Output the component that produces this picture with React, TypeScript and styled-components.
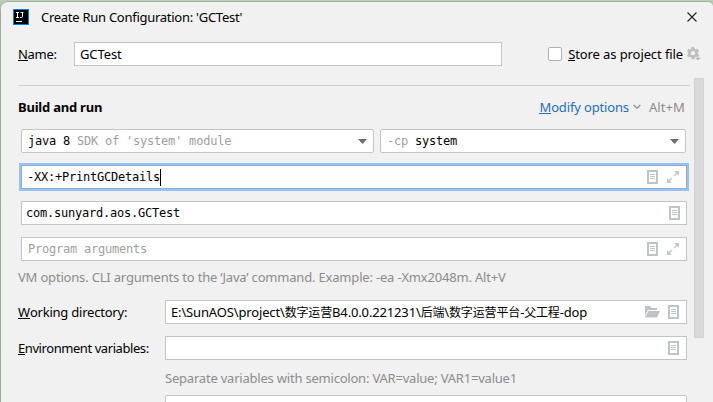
import React from "react";
import styled, { createGlobalStyle } from "styled-components";

const GlobalStyle = createGlobalStyle`
  *, *::before, *::after { box-sizing: border-box; }
  html, body { margin: 0; height: 100%; overflow: hidden; }
  body { background: linear-gradient(#b9d3b7, #a0aca0 12px, #9ba69c); }
`;

const ui = '"Noto Sans", "Noto Sans CJK SC", sans-serif';
const mono = '"DejaVu Sans Mono", monospace';

const Dialog = styled.main`
  height: 401px;
  margin: 1px 0 0 1px;
  border-top: 1px solid #a3b2a2;
  border-radius: 7px 5px 0 0;
  background: #f1f1f1;
  overflow: hidden;
  display: flex;
  flex-direction: column;
  font: 13px ${ui};
  color: #000;
`;

const Label = styled.span<{ $tone?: "hint" | "link" | "black"; $bold?: boolean; $track?: number }>`
  color: ${(p) => (p.$tone === "hint" ? "#8c8c8c" : p.$tone === "link" ? "#2470b3" : "#000")};
  font-weight: ${(p) => (p.$bold ? 700 : 400)};
  letter-spacing: ${(p) => p.$track ?? 0}px;
  line-height: 18px;
  white-space: nowrap;
`;

const Mnemonic = styled.span`
  box-shadow: inset 0 -1px 0 currentColor;
  display: inline-block;
  height: 16px;
  line-height: 18px;
  vertical-align: top;
`;

const TitleBar = styled.header`
  height: 30px;
  flex: none;
  display: flex;
  align-items: center;
  padding: 0 16px 0 12px;
  gap: 12px;

  & > svg:last-child { margin-left: auto; }
`;

const NameRow = styled.div`
  height: 24px;
  margin-top: 10px;
  flex: none;
  display: flex;
  align-items: center;
  padding: 0 12px 0 17px;
`;

const NameLabel = styled.div`
  width: 56px;
  display: flex;
`;

const Field = styled.div<{ $width?: number; $rounded?: boolean; $focused?: boolean; $pad?: number; $right?: number }>`
  width: ${(p) => (p.$width ? `${p.$width}px` : "auto")};
  height: 24px;
  flex: none;
  display: flex;
  align-items: center;
  padding: 0 ${(p) => p.$right ?? 7}px 0 ${(p) => p.$pad ?? 5}px;
  background: #fff;
  border: 1px solid ${(p) => (p.$focused ? "#87afda" : "#c4c4c4")};
  border-radius: ${(p) => (p.$rounded ? 2 : 0)}px;
  box-shadow: ${(p) => (p.$focused ? "0 0 0 2px #97c3f3" : "none")};
`;

const Actions = styled.div<{ $gap?: number }>`
  margin-left: auto;
  display: flex;
  align-items: center;
  gap: ${(p) => p.$gap ?? 9}px;
`;

const Store = styled.label`
  margin-left: auto;
  display: flex;
  align-items: center;
  gap: 6px;

  & > svg { margin-left: -2px; }
`;

const Checkbox = styled.span`
  width: 14px;
  height: 14px;
  background: #fff;
  border: 1px solid #b0b0b0;
  border-radius: 2px;
`;

const Body = styled.div`
  flex: 1;
  min-height: 0;
  margin-top: 12px;
  display: flex;
  justify-content: space-between;
`;

const Content = styled.div`
  width: 689px;
  padding: 7px 0 0 17px;
  display: flex;
  flex-direction: column;
`;

const Divider = styled.div`
  height: 1px;
  width: 672px;
  flex: none;
  background: #d0d0d0;
`;

const ScrollTrack = styled.div`
  width: 19px;
`;

const ScrollThumb = styled.div`
  width: 10px;
  height: 260px;
  background: #d9d9d9;
  border: 1px solid #d3d3d3;
`;

const SectionHead = styled.div`
  height: 43px;
  flex: none;
  display: flex;
  align-items: center;
  padding: 0 5px 2px 0;
`;

const Options = styled.div`
  margin-left: auto;
  display: flex;
  align-items: center;
`;

const Chevron = styled.svg`
  margin: 1px 8px 0 4px;
`;

const Stack = styled.div`
  flex: none;
  display: flex;
  flex-direction: column;
  gap: 12px;
  padding: 0 3px;
`;

const Combos = styled.div`
  display: flex;
  gap: 6px;
`;

const Code = styled.span<{ $muted?: boolean }>`
  font: 12px ${mono};
  letter-spacing: -0.22px;
  line-height: 18px;
  color: ${(p) => (p.$muted ? "#a0a0a0" : "#000")};
  white-space: pre;
`;

const Caret = styled.span`
  width: 1px;
  height: 17px;
  background: #000;
`;

const Hint = styled.div`
  height: 39px;
  flex: none;
  padding-bottom: 7px;
  display: flex;
  align-items: center;
`;

const Form = styled.div`
  flex: none;
  display: grid;
  grid-template-columns: 147px 522px;
  row-gap: 12px;
  align-items: center;
`;

const SubHint = styled.div`
  grid-column: 2;
  height: 11px;
  display: flex;
  align-items: center;
`;

const LastField = styled.div`
  grid-column: 2;
`;

const Han = styled.span`
  font-size: 12px;
`;

const Logo = () => (
  <svg width="16" height="16" viewBox="0 0 16 16">
    <rect width="16" height="16" fill="#087cfa" />
    <rect x="1" y="1" width="14" height="14" fill="#000" />
    <path d="M3 3.5h3M4.5 3.5v5M3 8.500h3M7.500 3.500h3M9.500 3.500v3.700q0 1.300-1.300 1.300H7" stroke="#fff" fill="none" />
    <path d="M3 12.500h6" stroke="#fff" />
  </svg>
);

const Close = () => (
  <svg width="10" height="10" viewBox="0 0 10 10">
    <path d="M.5.5l9 9M9.500.5l-9 9" stroke="#222" strokeWidth="1.100" fill="none" />
  </svg>
);

const Gear = () => (
  <svg width="14" height="14" viewBox="0 0 14 14">
    <path
      fill="#bfbfbf"
      fillRule="evenodd"
      d="M4.6 0h2.8l.4 1.8 1.2.6 1.8-.6 1.3 2.4-1.300 1.300v1.200l1.300 1.300-1.300 2.300-1.800-.5-1.200.7-.4 1.700H4.600l-.4-1.700-1.200-.7-1.800.5L0 8l1.200-1.300V5.500L0 4.200l1.200-2.400 1.800.6 1.200-.6zM6 3.900a2.200 2.200 0 1 0 0 4.400 2.200 2.200 0 0 0 0-4.400z"
    />
    <path d="M8 10.500h6l-3 3z" fill="#a9a9a9" stroke="#f1f1f1" strokeWidth=".5" />
  </svg>
);

const DownArrow = () => (
  <svg width="9" height="5" viewBox="0 0 9 5">
    <path d="M0 0h9L4.500 5z" fill="#6e6e6e" />
  </svg>
);

const Page = () => (
  <svg width="11" height="14" viewBox="0 0 11 14">
    <path d="M1 1h9v12H1z" fill="none" stroke="#bfc4c8" strokeWidth="2" />
    <path d="M3 4.500h5M3 6.500h5M3 8.500h5" stroke="#bfc4c8" />
  </svg>
);

const Expand = () => (
  <svg width="12" height="12" viewBox="0 0 12 12">
    <path d="M7 0h5v5zM0 7v5h5z" fill="#c4c8cb" />
    <path d="M7 5l3-3M2 10l3-3" stroke="#c4c8cb" strokeWidth="1.500" />
  </svg>
);

const Folder = () => (
  <svg width="15" height="12" viewBox="0 0 15 12">
    <path d="M0 0h5l1.500 2H12v2H3L0 9.500z" fill="#bfc4c8" />
    <path d="M3.400 5H15l-3 6.500H0z" fill="#bfc4c8" />
  </svg>
);

export default function App() {
  return (
    <>
      <GlobalStyle />
      <Dialog>
        <TitleBar>
          <Logo />
          <Label $track={-0.27}>Create Run Configuration: 'GCTest'</Label>
          <Close />
        </TitleBar>
        <NameRow>
          <NameLabel>
            <Label $track={-0.3}><Mnemonic>N</Mnemonic>ame:</Label>
          </NameLabel>
          <Field $width={428}>
            <Label $track={-0.1}>GCTest</Label>
          </Field>
          <Store>
            <Checkbox />
            <Label $track={-0.1}><Mnemonic>S</Mnemonic>tore as project file</Label>
            <Gear />
          </Store>
        </NameRow>
        <Body>
          <Content>
            <Divider />
            <SectionHead>
              <Label $bold $track={-0.22}>Build and run</Label>
              <Options>
                <Label $tone="link" $track={-0.15}><Mnemonic>M</Mnemonic>odify options</Label>
                <Chevron width="8" height="6" viewBox="0 0 8 6">
                  <path d="M.7 1L4 4.300 7.300 1" stroke="#8f9aa5" strokeWidth="1.500" fill="none" />
                </Chevron>
                <Label $tone="hint" $track={0.1}>Alt+M</Label>
              </Options>
            </SectionHead>
            <Stack>
              <Combos>
                <Field $width={353} $rounded $pad={6} $right={6}>
                  <Code>java 8 </Code>
                  <Code $muted>SDK of 'system' module</Code>
                  <Actions><DownArrow /></Actions>
                </Field>
                <Field $width={306} $rounded $pad={6} $right={6}>
                  <Code $muted>-cp </Code>
                  <Code>system</Code>
                  <Actions><DownArrow /></Actions>
                </Field>
              </Combos>
              <Field $focused>
                <Code>-XX:+PrintGCDetails</Code>
                <Caret />
                <Actions><Page /><Expand /></Actions>
              </Field>
              <Field $pad={4} $right={6}>
                <Code>com.sunyard.aos.GCTest</Code>
                <Actions><Page /></Actions>
              </Field>
              <Field $pad={6}>
                <Code $muted>Program arguments</Code>
                <Actions><Page /><Expand /></Actions>
              </Field>
            </Stack>
            <Hint>
              <Label $tone="hint" $track={-0.185}>
                VM options. CLI arguments to the ‘Java’ command. Example: -ea -Xmx2048m. Alt+V
              </Label>
            </Hint>
            <Form>
              <Label $track={-0.22}><Mnemonic>W</Mnemonic>orking directory:</Label>
              <Field>
                <Label $track={-0.15}>
                  E:\SunAOS\project\<Han>数字运营</Han>B4.0.0.221231\<Han>后端</Han>\<Han>数字运营平台</Han>-<Han>父工程</Han>-dop
                </Label>
                <Actions $gap={8}><Folder /><Page /></Actions>
              </Field>
              <Label $track={-0.43}><Mnemonic>E</Mnemonic>nvironment variables:</Label>
              <Field>
                <Actions><Page /></Actions>
              </Field>
              <SubHint>
                <Label $tone="hint" $track={-0.21}>Separate variables with semicolon: VAR=value; VAR1=value1</Label>
              </SubHint>
              <LastField><Field $rounded /></LastField>
            </Form>
          </Content>
          <ScrollTrack>
            <ScrollThumb />
          </ScrollTrack>
        </Body>
      </Dialog>
    </>
  );
}
